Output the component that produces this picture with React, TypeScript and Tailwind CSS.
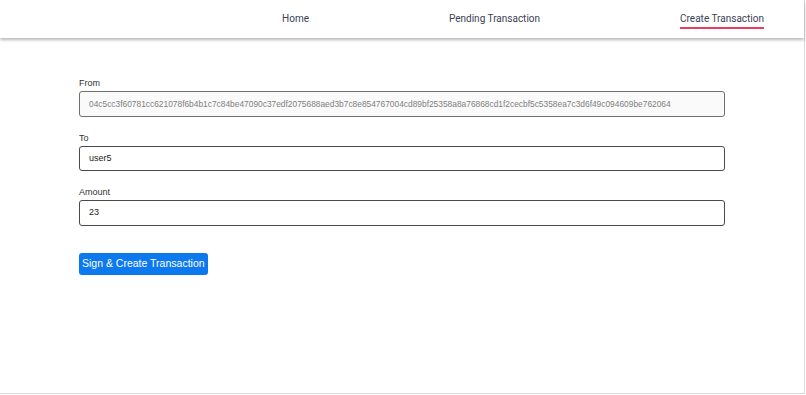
import React from "react";

export default function App() {
  return (
    <div className="w-[806px] h-[395px] bg-white overflow-hidden" style={{ fontFamily: '"Liberation Sans", Arial, sans-serif' }}>
      <div className="w-[805px] h-[394px] border-r border-b border-[#d9d9d9] bg-white flex flex-col">
        <header className="h-[38px] w-[804px] bg-white shadow-[0_2px_3px_rgba(0,0,0,0.28)] flex items-center justify-end pr-[40px] gap-[140px] text-[10px] text-[#3a4255] shrink-0 relative z-10 pb-[1px]" style={{ fontFamily: 'Roboto, "Noto Sans", sans-serif' }}>
          <a>Home</a>
          <a>Pending Transaction</a>
          <a className="relative">
            Create Transaction
            <span className="absolute left-0 right-0 -bottom-[3px] h-[2px] bg-[#ea3a60]" />
          </a>
        </header>
        <main className="pl-[79px] pt-[41px] w-[725px]">
          <div className="flex flex-col">
            <label className="text-[9px] text-[#333] leading-none mb-[3px]">From</label>
            <div className="h-[26px] rounded-[3px] border-[1.5px] border-[#6f6f6f] bg-[#fafafa] flex items-center px-[9px] text-[8.4px] text-[#808080] whitespace-nowrap overflow-hidden">
              04c5cc3f60781cc621078f6b4b1c7c84be47090c37edf2075688aed3b7c8e854767004cd89bf25358a8a76868cd1f2cecbf5c5358ea7c3d6f49c094609be762064
            </div>
            <label className="text-[9px] text-[#333] leading-none mt-[17px] mb-[3px]">To</label>
            <div className="h-[25px] rounded-[3px] border-[1.5px] border-[#4a4a4a] bg-white flex items-center px-[9px] text-[9px] text-[#222]">
              user5
            </div>
            <label className="text-[9px] text-[#333] leading-none mt-[17px] mb-[3px]">Amount</label>
            <div className="h-[26px] rounded-[3px] border-[1.5px] border-[#4a4a4a] bg-white flex items-center px-[9px] text-[9px] text-[#222]">
              23
            </div>
          </div>
          <button className="mt-[27px] h-[22px] px-[3px] whitespace-nowrap rounded-[3px] bg-[#0d79ee] text-white text-[10.5px] flex items-center justify-center" style={{ fontFamily: '"Liberation Sans", Arial, sans-serif' }}>
            Sign &amp; Create Transaction
          </button>
        </main>
      </div>
    </div>
  );
}
